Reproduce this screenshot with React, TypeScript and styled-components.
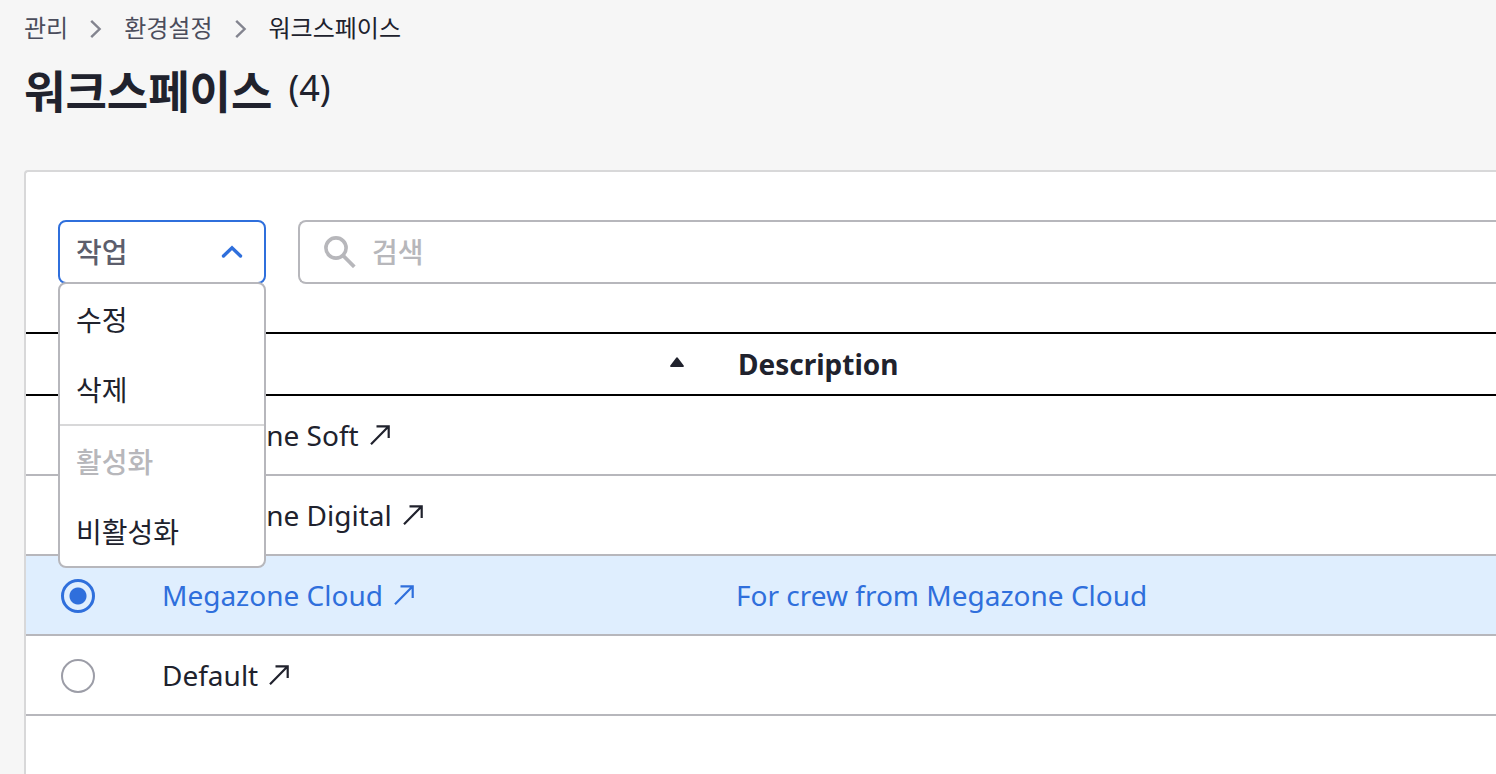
import React, { useState } from "react";
import styled, { createGlobalStyle, css } from "styled-components";

const color = {
  page: "#f6f6f6",
  ink: "#20222d",
  muted: "#4b4d5c",
  label: "#5c5e6c",
  icon: "#83848f",
  disabled: "#b7b7bb",
  line: "#b7b7bc",
  soft: "#d8d8d9",
  blue: "#2f6fdc",
  selected: "#dfeefe",
};

const GlobalStyle = createGlobalStyle`
  *, *::before, *::after { box-sizing: border-box; }
  body {
    margin: 0;
    background: ${color.page};
    color: ${color.ink};
    font-family: "Noto Sans", "Noto Sans CJK KR", sans-serif;
    font-size: 28px;
    line-height: 38px;
  }
  button, input { font: inherit; color: inherit; }
`;

const Page = styled.main`
  display: flex;
  flex-direction: column;
  min-height: 100vh;
  padding: 8px 0 0 24px;
`;

const Breadcrumb = styled.ol`
  display: flex;
  align-items: center;
  gap: 20px;
  margin: 0;
  padding: 0;
  list-style: none;
  font-size: 24px;
  line-height: 40px;
`;

const Crumb = styled.li`
  display: flex;
  align-items: center;
  gap: 20px;
  svg { margin-top: 2px; }
`;

const CrumbLink = styled.a<{ $current?: boolean }>`
  color: ${(p) => (p.$current ? color.ink : color.muted)};
  text-decoration: none;
`;

const Heading = styled.header`
  display: flex;
  align-items: center;
  gap: 16px;
  height: 84px;
  padding-top: 4px;
  margin-bottom: 38px;
`;

const Title = styled.h1`
  margin: 0;
  font-size: 45px;
  line-height: 60px;
  font-weight: 700;
`;

const Count = styled.span`
  padding-bottom: 8px;
  font-size: 36px;
  line-height: 60px;
`;

const Card = styled.section`
  flex: 1;
  border: 2px solid ${color.soft};
  border-right: 0;
  border-radius: 4px 0 0 0;
  border-bottom: 0;
  background: #fff;
`;

const Toolbar = styled.div`
  display: flex;
  gap: 32px;
  padding: 48px 0 48px 32px;
`;

const Dropdown = styled.div`
  position: relative;
  flex: none;
  width: 208px;
`;

const DropdownButton = styled.button`
  display: flex;
  align-items: center;
  justify-content: space-between;
  width: 100%;
  height: 64px;
  padding: 0 20px 0 16px;
  border: 2px solid ${color.blue};
  border-radius: 8px;
  background: #fff;
  color: ${color.label};
  font-weight: 500;
  cursor: pointer;
`;

const Menu = styled.div`
  position: absolute;
  z-index: 1;
  top: 62px;
  left: 0;
  width: 100%;
  border: 2px solid ${color.line};
  border-radius: 8px;
  background: #fff;
`;

const MenuGroup = styled.div`
  & + & { border-top: 2px solid ${color.soft}; }
`;

const MenuItem = styled.button`
  display: block;
  width: 100%;
  height: 70px;
  padding: 2px 16px 0;
  border: 0;
  background: none;
  text-align: left;
  cursor: pointer;
  &:disabled { color: ${color.disabled}; font-weight: 500; cursor: default; }
`;

const Search = styled.label`
  display: flex;
  flex: 1;
  align-items: center;
  gap: 16px;
  height: 64px;
  padding-left: 24px;
  border: 2px solid ${color.line};
  border-right: 0;
  border-radius: 8px 0 0 8px;
  svg { flex: none; }
`;

const SearchInput = styled.input`
  flex: 1;
  min-width: 0;
  padding: 0;
  border: 0;
  outline: 0;
  background: none;
  font-weight: 500;
  &::placeholder { color: ${color.disabled}; opacity: 1; }
`;

const Table = styled.table`
  width: 100%;
  table-layout: fixed;
  border-spacing: 0;
`;

const ChoiceCol = styled.col`
  width: 120px;
`;

const NameCol = styled.col`
  width: 574px;
`;

const HeadCell = styled.th`
  height: 64px;
  padding: 0 36px 0 18px;
  border: solid #000;
  border-width: 2px 0;
  text-align: left;
`;

const SortButton = styled.button`
  display: flex;
  align-items: center;
  justify-content: space-between;
  width: 100%;
  padding: 0;
  border: 0;
  background: none;
  font-weight: 700;
  cursor: pointer;
  svg { margin-bottom: 4px; }
`;

const Row = styled.tr<{ $selected: boolean }>`
  ${(p) =>
    p.$selected &&
    css`
      background: ${color.selected};
      color: ${color.blue};
    `}
`;

const Cell = styled.td`
  height: 80px;
  padding: 0 16px;
  border-bottom: 2px solid ${color.line};
`;

const ChoiceCell = styled(Cell)`
  padding: 2px 0 0 35px;
`;

const Radio = styled.input`
  display: block;
  appearance: none;
  width: 34px;
  height: 34px;
  margin: 0;
  border: 2px solid #9c9da7;
  border-radius: 50%;
  background: #fff;
  cursor: pointer;
  &:checked {
    border: 3px solid ${color.blue};
    background: radial-gradient(circle, ${color.blue} 8px, ${color.selected} 9px);
  }
`;

const NameLink = styled.a`
  display: flex;
  align-items: center;
  gap: 11px;
  color: inherit;
  text-decoration: none;
`;

const ChevronRight = () => (
  <svg width="16" height="20" viewBox="0 0 16 20" fill="none" stroke={color.icon} strokeWidth="2.4" aria-hidden="true">
    <path d="M3.2 1.8L11.6 10L3.2 18.2" />
  </svg>
);

const ChevronUp = () => (
  <svg width="24" height="16" viewBox="0 0 24 16" fill="none" stroke={color.blue} strokeWidth="3.4" strokeLinecap="round" aria-hidden="true">
    <path d="M3.5 12L12 3.8L20.5 12" />
  </svg>
);

const SearchIcon = () => (
  <svg width="32" height="32" viewBox="0 0 32 32" fill="none" stroke={color.disabled} aria-hidden="true">
    <circle cx="12" cy="12" r="10.1" strokeWidth="3.6" />
    <path d="M19.5 20L30.3 30.8" strokeWidth="3.8" />
  </svg>
);

const SortIcon = () => (
  <svg width="14" height="10" viewBox="0 0 14 10" fill={color.ink} aria-hidden="true">
    <path d="M7 0.3Q7.6 0.3 8 0.9L13.7 8.4Q14.3 10 13 10H1Q-0.3 10 0.3 8.4L6 0.9Q6.4 0.3 7 0.3Z" />
  </svg>
);

const ArrowUpRight = () => (
  <svg width="20" height="20" viewBox="0 0 20 20" fill="none" stroke="currentColor" strokeWidth="2.2" aria-hidden="true">
    <path d="M6.5 1.3H18.7V13M18.7 1.3L1 19.2" />
  </svg>
);

const workspaces = [
  { id: "soft", name: "Megazone Soft", description: "" },
  { id: "digital", name: "Megazone Digital", description: "" },
  { id: "cloud", name: "Megazone Cloud", description: "For crew from Megazone Cloud" },
  { id: "default", name: "Default", description: "" },
];

const crumbs = ["관리", "환경설정", "워크스페이스"];

export default function App() {
  const [selected, setSelected] = useState("cloud");
  const [open, setOpen] = useState(true);

  return (
    <>
      <GlobalStyle />
      <Page>
        <nav>
          <Breadcrumb>
            {crumbs.map((crumb, i) => (
              <Crumb key={crumb}>
                {i > 0 && <ChevronRight />}
                <CrumbLink href="#" $current={i === crumbs.length - 1}>
                  {crumb}
                </CrumbLink>
              </Crumb>
            ))}
          </Breadcrumb>
        </nav>
        <Heading>
          <Title>워크스페이스</Title>
          <Count>({workspaces.length})</Count>
        </Heading>
        <Card>
          <Toolbar>
            <Dropdown>
              <DropdownButton type="button" aria-haspopup="menu" aria-expanded={open} onClick={() => setOpen(!open)}>
                작업
                <ChevronUp />
              </DropdownButton>
              {open && (
                <Menu role="menu">
                  <MenuGroup>
                    <MenuItem role="menuitem">수정</MenuItem>
                    <MenuItem role="menuitem">삭제</MenuItem>
                  </MenuGroup>
                  <MenuGroup>
                    <MenuItem role="menuitem" disabled>활성화</MenuItem>
                    <MenuItem role="menuitem">비활성화</MenuItem>
                  </MenuGroup>
                </Menu>
              )}
            </Dropdown>
            <Search>
              <SearchIcon />
              <SearchInput type="text" placeholder="검색" aria-label="검색" />
            </Search>
          </Toolbar>
          <Table>
            <colgroup>
              <ChoiceCol />
              <NameCol />
              <col />
            </colgroup>
            <thead>
              <tr>
                <HeadCell />
                <HeadCell scope="col" aria-sort="ascending">
                  <SortButton type="button">
                    Name
                    <SortIcon />
                  </SortButton>
                </HeadCell>
                <HeadCell scope="col">Description</HeadCell>
              </tr>
            </thead>
            <tbody>
              {workspaces.map((w) => (
                <Row key={w.id} $selected={w.id === selected}>
                  <ChoiceCell>
                    <Radio
                      type="radio"
                      name="workspace"
                      aria-label={w.name}
                      checked={w.id === selected}
                      onChange={() => setSelected(w.id)}
                    />
                  </ChoiceCell>
                  <Cell>
                    <NameLink href="#">
                      {w.name}
                      <ArrowUpRight />
                    </NameLink>
                  </Cell>
                  <Cell>{w.description}</Cell>
                </Row>
              ))}
            </tbody>
          </Table>
        </Card>
      </Page>
    </>
  );
}
